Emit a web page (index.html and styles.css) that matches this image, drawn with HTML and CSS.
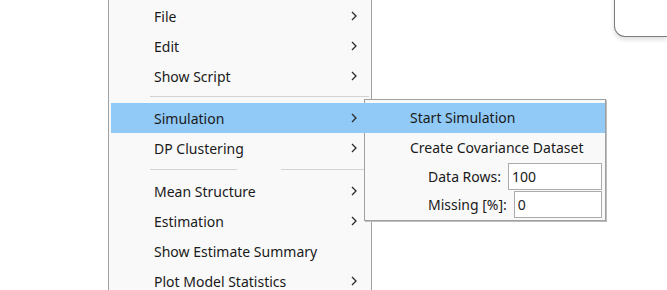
FILE: index.html
```html
<!DOCTYPE html>
<html lang="en">
<head>
    <meta charset="UTF-8">
    <meta name="viewport" content="width=device-width, initial-scale=1.0">
    <title>Model Menu</title>
    <link rel="stylesheet" href="styles.css">
</head>
<body>
    <div class="desk">
        <!-- window behind the menu, top right -->
        <div class="window-corner">
            <div class="window-inner"></div>
        </div>

        <!-- main context menu -->
        <div class="menu">
            <div class="menu-item">File <svg class="chevron" width="6" height="10" viewBox="0 0 6 10"><polyline points="1,1 5,5 1,9"/></svg></div>
            <div class="menu-item">Edit <svg class="chevron" width="6" height="10" viewBox="0 0 6 10"><polyline points="1,1 5,5 1,9"/></svg></div>
            <div class="menu-item">Show Script <svg class="chevron" width="6" height="10" viewBox="0 0 6 10"><polyline points="1,1 5,5 1,9"/></svg></div>
            <div class="separator"></div>
            <div class="menu-item active">Simulation <svg class="chevron" width="6" height="10" viewBox="0 0 6 10"><polyline points="1,1 5,5 1,9"/></svg></div>
            <div class="menu-item">DP Clustering <svg class="chevron" width="6" height="10" viewBox="0 0 6 10"><polyline points="1,1 5,5 1,9"/></svg></div>
            <div class="separator split"></div>
            <div class="menu-item">Mean Structure <svg class="chevron" width="6" height="10" viewBox="0 0 6 10"><polyline points="1,1 5,5 1,9"/></svg></div>
            <div class="menu-item">Estimation <svg class="chevron" width="6" height="10" viewBox="0 0 6 10"><polyline points="1,1 5,5 1,9"/></svg></div>
            <div class="menu-item">Show Estimate Summary</div>
            <div class="menu-item">Plot Model Statistics <svg class="chevron" width="6" height="10" viewBox="0 0 6 10"><polyline points="1,1 5,5 1,9"/></svg></div>
        </div>

        <!-- Simulation submenu -->
        <div class="submenu">
            <div class="sub-item active">Start Simulation</div>
            <div class="sub-item">Create Covariance Dataset</div>
            <div class="field-row">
                <label for="dataRows">Data Rows:</label>
                <input type="text" id="dataRows" value="100">
            </div>
            <div class="field-row">
                <label for="missing">Missing [%]:</label>
                <input type="text" id="missing" value="0">
            </div>
        </div>
    </div>
</body>
</html>
```

FILE: styles.css
```css
body {
    margin: 0;
    background-color: #fff;
    font-family: "Noto Sans", "Liberation Sans", sans-serif;
    font-size: 14px;
    color: #1a1a1a;
    overflow: hidden;
}

.desk {
    position: relative;
    height: 290px;
    overflow: hidden;
}

/* window edge in the top right corner */
.window-corner {
    position: absolute;
    left: 614px;
    top: -30px;
    width: 53px;
    height: 67px;
    box-sizing: border-box;
    border: 1.5px solid #7c7c7c;
    border-right: none;
    border-radius: 0 0 0 11px;
    background-color: #fff;
    box-shadow: 0 3px 4px rgba(0, 0, 0, 0.12);
    overflow: hidden;
}

.window-inner {
    position: absolute;
    left: 17px;
    top: 0;
    width: 60px;
    height: 23px;
    border: 1px solid #e6e6e6;
}

.menu {
    width: 258px;
    margin: -2px 0 0 108px;
    padding: 2px;
    border: 1px solid #a0a0a0;
    background-color: #f9f9f9;
}

.menu-item {
    display: flex;
    align-items: center;
    justify-content: space-between;
    height: 30px;
    padding: 0 12px 0 43px;
}

.menu-item.active {
    background-color: #91c9f7;
}

.chevron {
    fill: none;
    stroke: #2b2b2b;
    stroke-width: 1.3;
}

.separator {
    height: 12px;
    margin-left: 39px;
    background-image: linear-gradient(#d3d3d3, #d3d3d3);
    background-size: 100% 1px;
    background-position: 0 5px;
    background-repeat: no-repeat;
}

/* the lower separator is drawn in two pieces */
.separator.split {
    height: 13px;
    background-image: linear-gradient(to right, #d3d3d3 0 87px, transparent 87px 131px, #d3d3d3 131px);
    background-position: 0 6px;
}

.submenu {
    position: absolute;
    left: 364px;
    top: 99px;
    width: 240px;
    padding: 3px 0 1px 0;
    border: 1px solid #a0a0a0;
    background-color: #f9f9f9;
    box-shadow: 1px 1px 0 #bdbdbd;
}

.sub-item {
    height: 30px;
    line-height: 30px;
    padding-left: 45px;
}

.sub-item.active {
    margin-left: -1px;
    padding-left: 46px;
    background-color: #91c9f7;
}

.field-row {
    display: flex;
    align-items: center;
    gap: 7px;
    padding: 0 3px 1px 63px;
}

.field-row label {
    white-space: nowrap;
}

.field-row input {
    flex: 1;
    min-width: 0;
    height: 27px;
    box-sizing: border-box;
    padding: 0 3px;
    border: 1.5px solid #ababab;
    background-color: #fff;
    font-family: inherit;
    font-size: 14px;
    color: #1a1a1a;
    outline: none;
}
```
